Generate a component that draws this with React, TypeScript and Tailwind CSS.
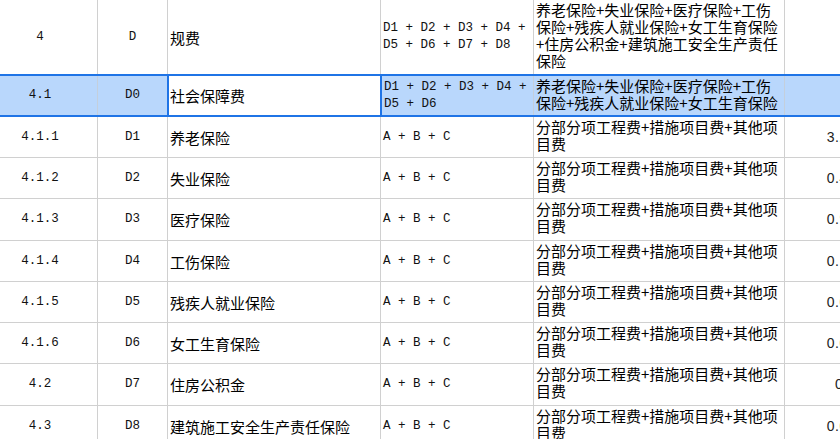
import React from 'react';

type Row = {
  no: string;
  code: string;
  name: string;
  formula: string;
  base: string;
  rate: string;
  h: string;
};

const rows: Row[] = [
  { no: '4.1.1', code: 'D1', name: '养老保险', formula: 'A + B + C', base: '分部分项工程费+措施项目费+其他项目费', rate: '3.25', h: 'h-[41px]' },
  { no: '4.1.2', code: 'D2', name: '失业保险', formula: 'A + B + C', base: '分部分项工程费+措施项目费+其他项目费', rate: '0.48', h: 'h-[41px]' },
  { no: '4.1.3', code: 'D3', name: '医疗保险', formula: 'A + B + C', base: '分部分项工程费+措施项目费+其他项目费', rate: '0.96', h: 'h-[42px]' },
  { no: '4.1.4', code: 'D4', name: '工伤保险', formula: 'A + B + C', base: '分部分项工程费+措施项目费+其他项目费', rate: '0.16', h: 'h-[41px]' },
  { no: '4.1.5', code: 'D5', name: '残疾人就业保险', formula: 'A + B + C', base: '分部分项工程费+措施项目费+其他项目费', rate: '0.04', h: 'h-[41px]' },
  { no: '4.1.6', code: 'D6', name: '女工生育保险', formula: 'A + B + C', base: '分部分项工程费+措施项目费+其他项目费', rate: '0.08', h: 'h-[41px]' },
  { no: '4.2', code: 'D7', name: '住房公积金', formula: 'A + B + C', base: '分部分项工程费+措施项目费+其他项目费', rate: '0.5', h: 'h-[42px]' },
  { no: '4.3', code: 'D8', name: '建筑施工安全生产责任保险', formula: 'A + B + C', base: '分部分项工程费+措施项目费+其他项目费', rate: '0.05', h: 'h-[41px]' },
];

const mono = "font-['Liberation_Mono','Noto_Sans_CJK_SC',monospace] text-[12.5px] leading-[17px] text-[#111]";
const cjk = "font-['Noto_Sans_CJK_SC',sans-serif] text-[15px] leading-[17px] text-black";
const num = "font-['Liberation_Sans',sans-serif] text-[14px] tracking-[0.5px] text-[#222]";

function DataRow({ r }: { r: Row }) {
  return (
    <div className={`flex shrink-0 border-b border-[#d0d0d0] ${r.h}`}>
      <div className={`w-[115px] shrink-0 border-r border-[#d0d0d0] flex items-center justify-center ${mono}`}>{r.no}</div>
      <div className={`w-[70px] shrink-0 border-r border-[#d0d0d0] flex items-center justify-center ${mono}`}>{r.code}</div>
      <div className={`w-[213px] shrink-0 border-r border-[#d0d0d0] flex items-center pl-[2px] ${cjk}`}>{r.name}</div>
      <div className={`w-[153px] shrink-0 border-r border-[#d0d0d0] flex items-center pl-[2px] pr-[2px] ${mono}`}>{r.formula}</div>
      <div className={`w-[251px] shrink-0 border-r border-[#d0d0d0] pt-[1px] pl-[2px] pr-[2px] ${cjk}`}>{r.base}</div>
      <div className={`w-[75px] shrink-0 flex items-center justify-end pr-[4px] ${num}`}>{r.rate}</div>
    </div>
  );
}

export default function App() {
  return (
    <div className="w-[840px] h-[439px] overflow-hidden bg-white">
      <div className="flex flex-col -ml-[17px] w-[877px]">
        {/* 4 规费 */}
        <div className="flex shrink-0 h-[74px]">
          <div className={`w-[115px] shrink-0 border-r border-[#d0d0d0] flex items-center justify-center ${mono}`}>4</div>
          <div className={`w-[70px] shrink-0 border-r border-[#d0d0d0] flex items-center justify-center ${mono}`}>D</div>
          <div className={`w-[213px] shrink-0 border-r border-[#d0d0d0] flex items-center pl-[2px] ${cjk}`}>规费</div>
          <div className={`w-[153px] shrink-0 border-r border-[#d0d0d0] flex items-center pl-[2px] pr-[2px] ${mono}`}>
            D1 + D2 + D3 + D4 + D5 + D6 + D7 + D8
          </div>
          <div className={`w-[251px] shrink-0 border-r border-[#d0d0d0] pt-[1px] pl-[2px] pr-[2px] ${cjk}`}>
            养老保险+失业保险+医疗保险+工伤保险+残疾人就业保险+女工生育保险+住房公积金+建筑施工安全生产责任保险
          </div>
          <div className="w-[75px] shrink-0" />
        </div>

        {/* selected row 4.1 */}
        <div className="flex shrink-0 h-[43px] border-y-2 border-[#1f74e6] bg-[#b9d7fc]">
          <div className={`w-[115px] shrink-0 border-r border-[#c4cfdc] flex items-center justify-center ${mono}`}>4.1</div>
          <div className={`w-[69px] shrink-0 flex items-center justify-center ${mono}`}>D0</div>
          <div className={`w-[215px] shrink-0 border-x-2 border-[#1f74e6] bg-white flex items-center pl-[1px] ${cjk}`}>社会保障费</div>
          <div className={`w-[152px] shrink-0 border-r border-[#c4cfdc] flex items-center pl-[2px] pr-[2px] ${mono}`}>
            D1 + D2 + D3 + D4 + D5 + D6
          </div>
          <div className={`w-[251px] shrink-0 border-r border-[#c4cfdc] pt-[1px] pl-[2px] pr-[2px] ${cjk}`}>
            养老保险+失业保险+医疗保险+工伤保险+残疾人就业保险+女工生育保险
          </div>
          <div className="w-[75px] shrink-0" />
        </div>

        {rows.map((r) => (
          <DataRow key={r.no} r={r} />
        ))}
      </div>
    </div>
  );
}
